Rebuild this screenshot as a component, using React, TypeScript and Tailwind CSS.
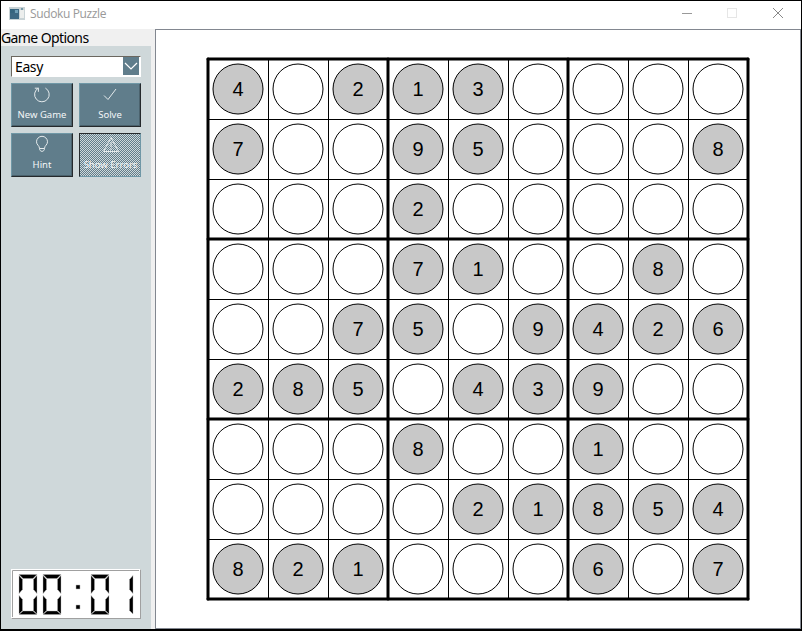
import React from "react";

const PUZZLE = [
  "4.213....",
  "7..95...8",
  "...2.....",
  "...71..8.",
  "..75.9426",
  "285.439..",
  "...8..1..",
  "....21854",
  "821...6.7",
];

function Cell({ value }: { value: string }) {
  const given = value !== ".";
  return (
    <div className="relative flex h-[60px] w-[60px] items-center justify-center border-l border-t border-black">
      <svg className="absolute -left-px -top-px" width="60" height="60" viewBox="0 0 60 60">
        <circle cx="30" cy="30" r="25" fill={given ? "#c8c8c8" : "#fff"} stroke="#000" strokeWidth="1" />
        {given && (
          <text x="30" y="37" textAnchor="middle" fontSize="20" fill="#000">
            {value}
          </text>
        )}
      </svg>
    </div>
  );
}

function Board() {
  return (
    <div className="relative ml-[52px] mt-[29px] grid h-[540px] w-[540px] grid-cols-9">
      {PUZZLE.join("").split("").map((v, i) => (
        <Cell key={i} value={v} />
      ))}
      <svg className="absolute -left-1 -top-1" width="548" height="548" viewBox="-4 -4 548 548" stroke="#000" strokeWidth="3" strokeLinecap="round">
        {[0, 180, 360, 540].map((p) => (
          <g key={p}>
            <path d={`M${p} 0V540`} />
            <path d={`M0 ${p}H540`} />
          </g>
        ))}
      </svg>
    </div>
  );
}

function ToolButton({ label, pressed = false, children }: { label: string; pressed?: boolean; children: React.ReactNode }) {
  const look = pressed
    ? "border-b-[#6f97a6] border-l-[#25292c] border-r-[#6f97a6] border-t-[#25292c] bg-[#607d8b] pl-px"
    : "border-b-[#25292c] border-l-[#6f97a6] border-r-[#25292c] border-t-[#6f97a6] bg-[#607d8b] shadow-[inset_-1px_-1px_0_#4b626d]";
  return (
    <button className={`relative flex h-[44px] w-[62px] flex-col items-center border ${look} text-[#f4f7f8]`}>
      {pressed && (
        <svg className="absolute left-0 top-0" width="60" height="42" shapeRendering="crispEdges">
          <defs>
            <pattern id="checker" width="2" height="2" patternUnits="userSpaceOnUse">
              <path d="M0 0h1v1h-1zM1 1h1v1h-1z" fill="#cfd8da" />
            </pattern>
          </defs>
          <rect width="60" height="42" fill="url(#checker)" />
        </svg>
      )}
      <svg className="relative" width="20" height="20" viewBox="0 0 20 20" fill="none" stroke="#e4eaec" strokeWidth="1">
        {children}
      </svg>
      <span className="relative mt-[5px] whitespace-nowrap font-['Noto_Sans',sans-serif] text-[9.5px] leading-[12px]">{label}</span>
    </button>
  );
}

const SEGMENTS: Record<string, string[]> = {
  "0": ["t", "tl", "tr", "bl", "br", "b"],
  "1": ["tr", "br"],
};

const SHAPES: Record<string, string> = {
  t: "M1 0H19L15 4H5Z",
  tl: "M1 1L4.5 5V15L1 19Z",
  tr: "M19 1V19L15.5 15V5Z",
  bl: "M1 21L4.5 25V36L1 39.5Z",
  br: "M19 21V39.5L15.5 36V25Z",
  b: "M1 40L5 36.5H15L19 40Z",
};

function Digit({ x, value }: { x: number; value: string }) {
  return (
    <g transform={`translate(${x} 4.5)`}>
      {SEGMENTS[value].map((s) => (
        <path key={s} d={SHAPES[s]} fill="#000" stroke="#b8b8b8" strokeWidth="0.4" />
      ))}
    </g>
  );
}

export default function App() {
  return (
    <div className="flex h-[631px] w-[802px] flex-col overflow-hidden border-b-2 border-l border-r border-t border-black bg-white font-['Liberation_Sans',Arial,sans-serif]">
      <header className="flex h-7 shrink-0 items-center">
        <svg className="-mt-[4px] ml-2" width="16" height="13" viewBox="0 0 16 13">
          <rect width="16" height="13" fill="#c9d3d6" />
          <rect x="1" y="2" width="9" height="10" fill="#3c6883" />
          <rect x="1" y="2" width="4" height="4" fill="#35657f" />
          <rect x="6" y="3" width="3" height="3" fill="#6fa0b8" />
          <rect x="11" y="3" width="4" height="8" fill="#eceeed" />
          <rect x="12" y="1" width="2" height="2" fill="#789aa9" />
        </svg>
        <span className="-mt-[3px] ml-[5px] grow font-['Open_Sans','Noto_Sans',sans-serif] text-[12px] leading-4 tracking-[-0.37px] text-[#999]">Sudoku Puzzle</span>
        <svg width="120" height="28" viewBox="681 1 120 28" fill="none">
          <path d="M682 13.5H692" stroke="#999" />
          <rect x="727.5" y="8.5" width="9" height="9" stroke="#e6e6e6" />
          <path d="M773 8L783 18M783 8L773 18" stroke="#888" />
        </svg>
      </header>
      <div className="flex min-h-0 grow">
        <div className="flex w-[154px] shrink-0 flex-col bg-[#f0f0f0]">
          <div className="relative z-10 h-[17px] shrink-0 whitespace-nowrap font-['Noto_Sans',sans-serif] text-[14px] leading-[17px] tracking-[-0.6px] text-black">Game Options</div>
          <aside className="flex w-[150px] grow flex-col bg-[#cfd8da] px-[10px] pb-[10px] pt-[10px]">
            <div className="flex h-[21px] w-[130px] border border-b-white border-l-[#6b675f] border-r-white border-t-[#6b675f] bg-white pr-px">
              <span className="grow pl-[3px] font-['Noto_Sans',sans-serif] text-[14px] leading-[20px] tracking-[-0.4px] text-black">Easy</span>
              <span className="flex h-[18px] w-4 items-center justify-center bg-[#607d8b]">
                <svg width="14" height="8" viewBox="0 0 14 8" fill="none" stroke="#fff" strokeWidth="1.2">
                  <path d="M1 1L7 7L13 1" />
                </svg>
              </span>
            </div>
            <div className="mt-[6px] grid w-[130px] grid-cols-[62px_62px] gap-x-[6px] gap-y-[6px]">
              <ToolButton label="New Game">
                <path d="M6.4 4.1A7.3 7.3 0 1 0 13.4 4.1M2.8 4.2H6.4V7.8" />
              </ToolButton>
              <ToolButton label="Solve">
                <path d="M4 11.5L8 15.5L16 5" />
              </ToolButton>
              <ToolButton label="Hint">
                <path d="M7.5 14.5C7.5 11.5 4.5 11 4.5 7.8A5.5 5.5 0 0 1 15.5 7.8C15.5 11 12.5 11.5 12.5 14.5ZM7.5 14.5C7.5 18.3 12.5 18.3 12.5 14.5" />
              </ToolButton>
              <ToolButton label="Show Errors" pressed>
                <path d="M10 3.5L17.5 17.5H2.5ZM10 8V13M10 14.5V16" />
              </ToolButton>
            </div>
            <div className="mt-auto h-[50px] w-[130px] border border-b-[#a0a0a0] border-l-white border-r-[#a0a0a0] border-t-white bg-white">
              <svg width="128" height="48" viewBox="12 570 128 48">
                <path d="M12.5 617V570.5H139" fill="none" stroke="#a0a0a0" />
                <g transform="translate(0 570)">
                  <Digit x={18} value="0" />
                  <Digit x={42} value="0" />
                  <path d="M76 15h4v4h-4zM76 35h4v4h-4z" fill="#000" stroke="#b8b8b8" strokeWidth="0.5" />
                  <Digit x={90} value="0" />
                  <Digit x={114} value="1" />
                </g>
              </svg>
            </div>
          </aside>
        </div>
        <main className="grow border border-[#828790] bg-white">
          <Board />
        </main>
      </div>
    </div>
  );
}
